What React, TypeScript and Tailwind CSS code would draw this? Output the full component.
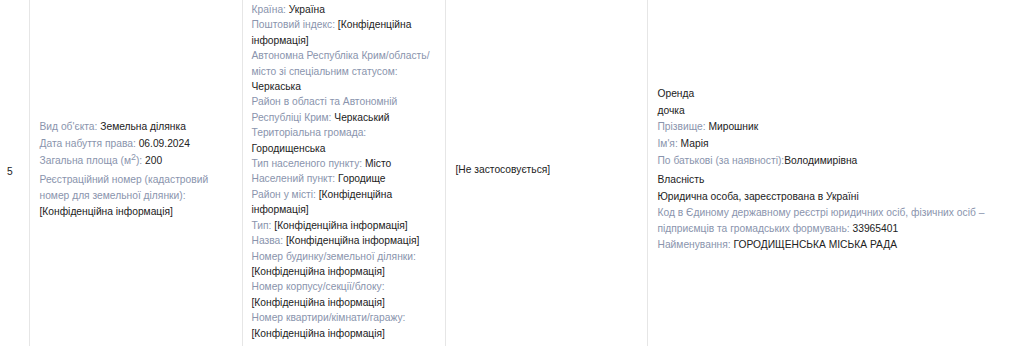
import React from "react";

const L = ({ children }: { children: React.ReactNode }) => (
  <span className="text-[#8a94ad]">{children}</span>
);

export default function App() {
  return (
    <div
      className="w-[1024px] h-[346px] overflow-hidden bg-white text-[10.25px] leading-[15.4px] text-[#222]"
      style={{ fontFamily: '"Liberation Sans", Arial, sans-serif' }}
    >
      <table className="-mt-[6px] w-[1024px] table-fixed border-collapse">
        <colgroup>
          <col className="w-[29px]" />
          <col className="w-[213px]" />
          <col className="w-[203px]" />
          <col className="w-[202px]" />
          <col />
        </colgroup>
        <tbody>
          <tr>
            <td className="align-middle py-2 pl-[7px] pr-1">5</td>
            <td className="align-middle border-l border-[#e6e6e6] pt-2 pb-[12px] pl-[10px] pr-[8px]">
              <div className="flex flex-col gap-[1.2px]">
                <div>
                  <L>Вид об'єкта: </L>Земельна ділянка
                </div>
                <div>
                  <L>Дата набуття права: </L>06.09.2024
                </div>
                <div>
                  <L>
                    Загальна площа (м<sup className="text-[9px] leading-[0] relative -top-[4px]">2</sup>):{" "}
                  </L>
                  200
                </div>
                <div className="mt-[3px]">
                  <L>Реєстраційний номер (кадастровий номер для земельної ділянки):</L>
                </div>
                <div>[Конфіденційна інформація]</div>
              </div>
            </td>
            <td className="align-middle border-l border-[#e6e6e6] py-2 pl-[9px] pr-[8px]">
              <div>
                <L>Країна: </L>Україна
              </div>
              <div>
                <L>Поштовий індекс: </L>[Конфіденційна інформація]
              </div>
              <div>
                <L>Автономна Республіка Крим/область/ місто зі спеціальним статусом: </L>
                Черкаська
              </div>
              <div>
                <L>Район в області та Автономній Республіці Крим: </L>Черкаський
              </div>
              <div>
                <L>Територіальна громада: </L>Городищенська
              </div>
              <div>
                <L>Тип населеного пункту: </L>Місто
              </div>
              <div>
                <L>Населений пункт: </L>Городище
              </div>
              <div>
                <L>Район у місті: </L>[Конфіденційна інформація]
              </div>
              <div>
                <L>Тип: </L>[Конфіденційна інформація]
              </div>
              <div>
                <L>Назва: </L>[Конфіденційна інформація]
              </div>
              <div>
                <L>Номер будинку/земельної ділянки: </L>[Конфіденційна інформація]
              </div>
              <div>
                <L>Номер корпусу/секції/блоку: </L>[Конфіденційна інформація]
              </div>
              <div>
                <L>Номер квартири/кімнати/гаражу: </L>[Конфіденційна інформація]
              </div>
            </td>
            <td className="align-middle border-l border-[#e6e6e6] pt-2 pb-[12px] pl-[10px] pr-[8px]">
              [Не застосовується]
            </td>
            <td className="align-middle border-l border-[#e6e6e6] pt-2 pb-[12px] pl-[10px] pr-[10px]">
              <div className="flex flex-col gap-[1.2px]">
                <div>Оренда</div>
                <div>дочка</div>
                <div>
                  <L>Прізвище: </L>Мирошник
                </div>
                <div>
                  <L>Ім'я: </L>Марія
                </div>
                <div>
                  <L>По батькові (за наявності):</L>Володимирівна
                </div>
                <div className="mt-[3px]">Власність</div>
                <div>Юридична особа, зареєстрована в Україні</div>
                <div>
                  <L>
                    Код в Єдиному державному реєстрі юридичних осіб, фізичних осіб – підприємців та
                    громадських формувань:{" "}
                  </L>
                  33965401
                </div>
                <div>
                  <L>Найменування: </L>ГОРОДИЩЕНСЬКА МІСЬКА РАДА
                </div>
              </div>
            </td>
          </tr>
        </tbody>
      </table>
    </div>
  );
}
